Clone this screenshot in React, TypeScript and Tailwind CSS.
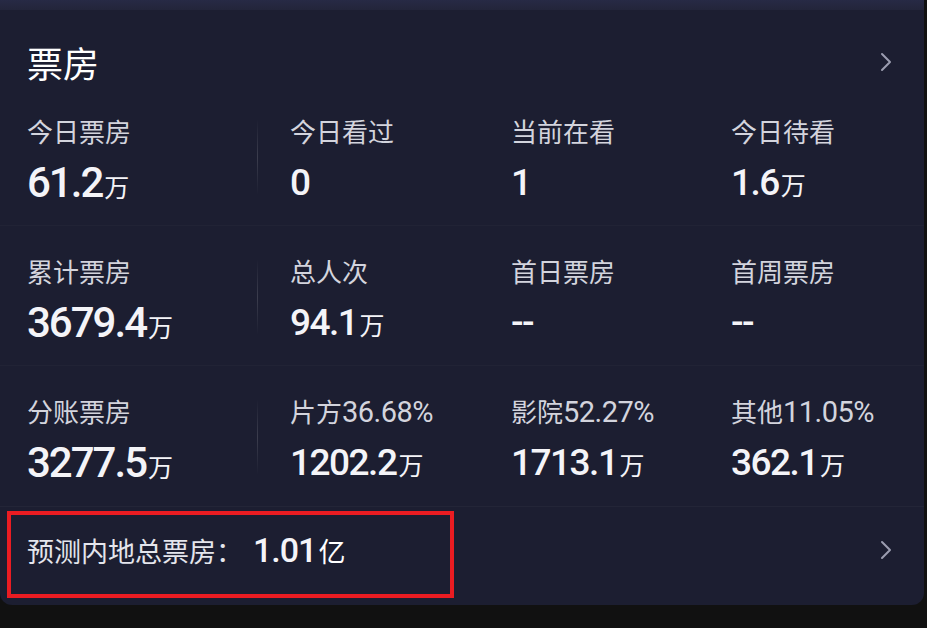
import React from 'react';

const ChevronRight = (props: React.SVGProps<SVGSVGElement>) => (
    <svg {...props} viewBox="0 0 12 20" fill="none" stroke="currentColor" strokeWidth="2" strokeLinecap="round" strokeLinejoin="round"><path d="M2 2l8 8-8 8"/></svg>
);

type Stat = { label: string; labelNum?: string; value: string; unit?: string };

const rows: Stat[][] = [
    [
        { label: '今日票房', value: '61.2', unit: '万' },
        { label: '今日看过', value: '0' },
        { label: '当前在看', value: '1' },
        { label: '今日待看', value: '1.6', unit: '万' },
    ],
    [
        { label: '累计票房', value: '3679.4', unit: '万' },
        { label: '总人次', value: '94.1', unit: '万' },
        { label: '首日票房', value: '--' },
        { label: '首周票房', value: '--' },
    ],
    [
        { label: '分账票房', value: '3277.5', unit: '万' },
        { label: '片方', labelNum: '36.68%', value: '1202.2', unit: '万' },
        { label: '影院', labelNum: '52.27%', value: '1713.1', unit: '万' },
        { label: '其他', labelNum: '11.05%', value: '362.1', unit: '万' },
    ],
];

const cjk = "font-['Noto_Sans_CJK_SC',sans-serif]";
const num = "font-['Roboto','Noto_Sans_CJK_SC',sans-serif]";

const StatCell = ({ s, big }: { s: Stat; big?: boolean }) => (
    <div>
        <div className={`h-[32px] leading-[32px] text-[26px] text-[#d3d4dd] ${cjk}`}>
            {s.label}
            {s.labelNum && <span className={`${num} text-[29px] tracking-[-0.5px]`}>{s.labelNum}</span>}
        </div>
        <div className={`mt-[14px] h-[44px] leading-[44px] text-[#f4f4f8] font-medium ${num} ${big ? 'text-[42px] tracking-[-2px]' : 'text-[37px] tracking-[-1.5px]'} flex items-baseline`}>
            <span>{s.value}</span>
            {s.unit && <span className={`${cjk} text-[25px] font-normal tracking-normal ml-[2px]`}>{s.unit}</span>}
        </div>
    </div>
);

const App: React.FC = () => {
    return (
        <div className="w-[927px] h-[628px] bg-[#111111] overflow-hidden relative">
            <div className="h-[10px] w-[924px] bg-gradient-to-b from-[#272a45] to-[#23253a]" />
            <div className="w-[924px] h-[595px] bg-[#1c1e31] rounded-b-[12px]">
                <div className="h-[76px] pl-[27px] pr-[32px] flex items-center justify-between">
                    <h1 className={`text-[36px] text-white mt-[28px] ${cjk}`}>票房</h1>
                    <ChevronRight className="w-[12px] h-[20px] text-[#9b9db0] mt-[28px]" />
                </div>
                {rows.map((row, i) => (
                    <div key={i} className={`h-[140px] pl-[27px] pt-[29px] flex ${i < 2 ? 'border-b border-white/[0.025]' : ''}`}>
                        <div className="w-[230px]">
                            <StatCell s={row[0]} big />
                        </div>
                        <div className="w-px h-[76px] mt-[4px] bg-gradient-to-b from-transparent via-white/[0.14] to-transparent" />
                        <div className="w-[221px] ml-[32px]">
                            <StatCell s={row[1]} />
                        </div>
                        <div className="w-[220px]">
                            <StatCell s={row[2]} />
                        </div>
                        <div className="flex-1">
                            <StatCell s={row[3]} />
                        </div>
                    </div>
                ))}
                <div className="h-[87px] border-t border-white/[0.03] pl-[27px] pr-[32px] flex items-center justify-between">
                    <div className={`text-[27px] text-[#e4e5ec] ${cjk} flex items-baseline`}>
                        预测内地总票房：
                        <span className={`${num} text-[34px] font-medium tracking-[-1px] text-[#f4f4f8] ml-[10px]`}>1.01</span>
                        <span className="text-white ml-[2px]">亿</span>
                    </div>
                    <ChevronRight className="w-[12px] h-[20px] text-[#9b9db0]" />
                </div>
            </div>
            <div className="absolute left-[7px] top-[511px] w-[447px] h-[87px] border-4 border-[#ea1c22]" />
        </div>
    );
};

export default App;
